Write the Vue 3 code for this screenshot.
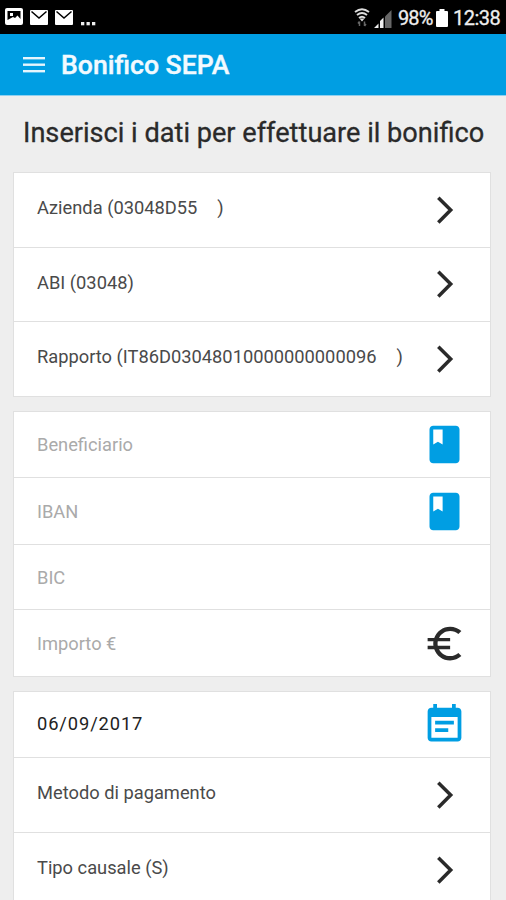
<script setup>
const accounts = [
  { label: 'Azienda (03048D55', tail: ')', cls: 'azienda' },
  { label: 'ABI (03048)', cls: 'abi' },
  { label: 'Rapporto (IT86D03048010000000000096', tail: ')', cls: 'rapporto' },
]
const fields = [
  { label: 'Beneficiario', icon: 'book', cls: 'beneficiario' },
  { label: 'IBAN', icon: 'book', cls: 'iban' },
  { label: 'BIC', cls: 'bic' },
  { label: 'Importo €', icon: 'euro', cls: 'importo' },
]
const details = [
  { label: '06/09/2017', icon: 'calendar', cls: 'date' },
  { label: 'Metodo di pagamento', icon: 'chevron', cls: 'metodo' },
  { label: 'Tipo causale (S)', icon: 'chevron', cls: 'tipo' },
]
const icons = {
  book: 'M18 2H6c-1.1 0-2 .9-2 2v16c0 1.1.9 2 2 2h12c1.1 0 2-.9 2-2V4c0-1.1-.9-2-2-2zM6 4h5v8l-2.5-1.5L6 12V4z',
  euro: 'M15 18.7c-2.6 0-4.85-1.5-5.9-3.7H15v-1.8H8.42c-.08-.4-.12-.8-.12-1.2s.04-.8.12-1.2H15V9H9.1C10.15 6.8 12.4 5.3 15 5.3c1.7 0 3.25.62 4.4 1.65L21 5.3C19.41 3.87 17.3 3 15 3c-3.92 0-7.24 2.51-8.48 6H3v1.8h3.1c-.07.4-.1.8-.1 1.2s.03.8.1 1.2H3V15h3.52c1.24 3.49 4.56 6 8.48 6 2.31 0 4.41-.87 6-2.3l-1.6-1.65c-1.15 1.03-2.7 1.65-4.4 1.65z',
  calendar: 'M17 10H7v2h10v-2zm2-7h-1V1h-2v2H8V1H6v2H5c-1.11 0-1.99.9-1.99 2L3 19c0 1.1.89 2 2 2h14c1.1 0 2-.9 2-2V5c0-1.1-.9-2-2-2zm0 16H5V8h14v11zm-5-5H7v2h7v-2z',
}
</script>

<template>
  <div class="screen">
    <div class="status">
      <div class="notifications">
        <svg class="photo" width="18" height="17" viewBox="0 0 18 17">
          <rect width="18" height="17" rx="2" fill="#fff" />
          <path d="M2.500 3h13v8l-3-3.500-2.500 2.500-2-1-5.500 3z" fill="#000" />
          <rect x="5" y="5" width="3" height="3" fill="#fff" />
        </svg>
        <svg v-for="n in 2" :key="n" class="mail" width="18" height="15" viewBox="0 0 18 15">
          <rect width="18" height="15" rx="1" fill="#fff" />
          <path d="M1.500 1.500L9 8l7.500-6.500" fill="none" stroke="#000" stroke-width="1.500" />
        </svg>
        <svg class="more" width="15" height="4" viewBox="0 0 15 4" fill="#eee">
          <rect x="0" width="3.300" height="3.300" /><rect x="5.500" width="3.300" height="3.300" /><rect x="11" width="3.300" height="3.300" />
        </svg>
      </div>
      <div class="indicators">
        <svg width="16" height="19" viewBox="0 0 16 19" fill="none" stroke="#ddd" stroke-width="1.900">
          <path d="M1 4Q8-1.500 15 4M3 7Q8 3 13 7M5 10Q8 7.500 11 10" />
          <path d="M5.500 10.500h5L8 13.500z" fill="#ddd" stroke="none" />
          <path d="M5.500 13.500v4.500M4 15.500l1.500-2M10.500 13.500v4.500M12 16L10.500 18" stroke="#666" stroke-width="1.500" />
        </svg>
        <svg class="signal" width="18" height="18" viewBox="0 0 18 18">
          <path d="M0 18l4.500-4.500V18zM6 18v-7l3.500-3.500V18z" fill="#eee" />
          <path d="M11 18V6.500L17.500 0v18z" fill="#666" />
        </svg>
        <span class="percent">98%</span>
        <svg class="battery" width="12" height="18" viewBox="0 0 12 18"><path d="M3.500 0h5v2H11q1 0 1 1v14q0 1-1 1H1q-1 0-1-1V3q0-1 1-1h2.500z" fill="#fff" /></svg>
        <span class="clock">12:38</span>
      </div>
    </div>
    <header class="bar">
      <svg width="22" height="17" viewBox="0 0 22 17" fill="#e6f5fd">
        <rect y="1" width="22" height="2.400" /><rect y="7.500" width="22" height="2.400" /><rect y="14" width="22" height="2.400" />
      </svg>
      <span class="title">Bonifico SEPA</span>
    </header>
    <h1>Inserisci i dati per effettuare il bonifico</h1>
    <section class="card">
      <div v-for="a in accounts" :key="a.cls" class="row tall" :class="a.cls">
        <span class="label">{{ a.label }}</span><span v-if="a.tail" class="label tail">{{ a.tail }}</span>
        <svg class="icon" viewBox="0 0 45 45"><path d="M16.300 9.700L28.700 22.100 16.300 34.500" class="arrow" /></svg>
      </div>
    </section>
    <section class="card">
      <div v-for="f in fields" :key="f.cls" class="row field" :class="f.cls">
        <span class="label">{{ f.label }}</span>
        <svg v-if="f.icon" class="icon" :class="f.icon" viewBox="0 0 24 24"><path :d="icons[f.icon]" /></svg>
      </div>
    </section>
    <section class="card">
      <div v-for="d in details" :key="d.cls" class="row" :class="[d.cls, { tall: d.icon === 'chevron' }]">
        <span class="label">{{ d.label }}</span>
        <svg v-if="d.icon === 'chevron'" class="icon" viewBox="0 0 45 45"><path d="M16.300 9.700L28.700 22.100 16.300 34.500" class="arrow" /></svg>
        <svg v-else class="icon" viewBox="0 0 24 24"><path :d="icons[d.icon]" /></svg>
      </div>
    </section>
  </div>
</template>

<style>
body { margin: 0; overflow: hidden; }
</style>

<style scoped>
.screen { height: 900px; overflow: hidden; background: #eee; font-family: Roboto, sans-serif; display: flex; flex-direction: column; }
svg { display: block; flex: none; }
.status { flex: none; height: 34px; background: #000; color: #eee; display: flex; justify-content: space-between; box-sizing: border-box; padding: 0 6px 0 5px; }
.notifications { display: flex; align-items: flex-end; gap: 7px; padding-bottom: 8px; }
.photo { margin-bottom: 1px; }
.mail { margin-bottom: 1px; }
.more { margin-left: 1px; }
.indicators { display: flex; align-items: center; padding-top: 1px; font-size: 20px; -webkit-text-stroke: 0.3px #eee; }
.signal { margin: 2px 6px 0 4px; }
.percent { width: 34px; letter-spacing: -0.9px; white-space: nowrap; }
.battery { margin: 0 5px 0 4px; }
.clock { width: 47px; letter-spacing: -0.5px; }
.bar { flex: none; height: 62px; background: #009ee3; border-bottom: 1px solid #8fd0f0; box-sizing: border-box; display: flex; align-items: center; padding-left: 23px; gap: 16px; }
.title { color: #f2faff; font-size: 26.600px; font-weight: 500; white-space: nowrap; -webkit-text-stroke: 0.4px #f2faff; }
h1 { flex: none; height: 76px; margin: 0; padding: 0 0 2px 23px; box-sizing: border-box; display: flex; align-items: center; color: #2a2a2a; font-size: 27.150px; font-weight: 400; white-space: nowrap; -webkit-text-stroke: 0.3px #2a2a2a; }
.card { flex: none; margin: 0 15px 14px 13px; background: #fff; border: 1px solid #e0e0e0; }
.row { height: 65px; display: flex; align-items: center; padding: 0 23px; border-bottom: 1px solid #e0e0e0; color: #4a4a4a; font-size: 18.300px; white-space: nowrap; }
.row:last-child { border-bottom: 0; }
.tall { height: 74px; }
.abi { height: 73px; }
.iban { height: 66px; }
.bic { height: 64px; }
.importo { height: 66px; }
.tall .label { padding-bottom: 5px; }
.tail { margin-left: 20px; }
.field .label { color: #aaa; }
.date .label { color: #222; letter-spacing: 0.9px; padding-bottom: 2px; }
.icon { width: 45px; height: 45px; margin-left: auto; fill: #009ee3; }
.euro { fill: #2a2a2a; }
.arrow { fill: none; stroke: #2a2a2a; stroke-width: 3.5; }
</style>
